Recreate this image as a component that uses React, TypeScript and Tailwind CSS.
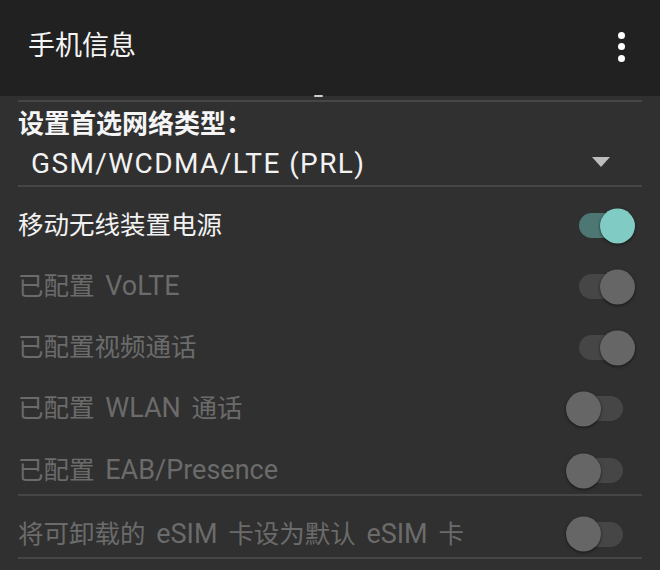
const font = { fontFamily: 'Roboto, "Noto Sans CJK SC", sans-serif' };

type ToggleProps = {
  on: boolean;
  enabled: boolean;
};

function Toggle({ on, enabled }: ToggleProps) {
  const track = enabled ? "bg-[#4d7773]" : "bg-[#464646]";
  const thumb = enabled ? "bg-[#80cbc4]" : "bg-[#666666]";
  return (
    <div className={`relative w-[44px] h-[25px] rounded-full ${track}`}>
      <div
        className={`absolute top-1/2 -translate-y-1/2 w-[35px] h-[35px] rounded-full shadow-[0_1px_3px_rgba(0,0,0,0.6)] ${thumb} ${
          on ? "left-[21px]" : "left-[-13px]"
        }`}
      />
    </div>
  );
}

function Divider() {
  return <div className="mx-[18px] h-[2px] bg-[#464646]" />;
}

// latin runs in the labels are drawn a bit larger than the CJK ones
function Label({ text }: { text: string }) {
  const parts = text.split(/([\x20-\x7e]+)/).filter((p) => p !== "");
  return (
    <>
      {parts.map((p, i) =>
        /^[\x20-\x7e]+$/.test(p) ? (
          <span key={i} className="text-[27px] [word-spacing:4px] whitespace-pre">
            {p}
          </span>
        ) : (
          <span key={i}>{p}</span>
        )
      )}
    </>
  );
}

type RowProps = {
  label: string;
  on: boolean;
  enabled: boolean;
  className: string;
};

function SwitchRow({ label, on, enabled, className }: RowProps) {
  return (
    <div className={`flex pl-[18px] pr-[37px] ${className}`}>
      <div className="flex flex-1 items-center justify-between">
        <span
          className={`text-[25.5px] leading-none ${enabled ? "text-[#f2f2f2]" : "text-[#6b6b6b]"}`}
        >
          <Label text={label} />
        </span>
        <Toggle on={on} enabled={enabled} />
      </div>
    </div>
  );
}

export default function App() {
  return (
    <div className="w-[660px] h-[570px] overflow-hidden bg-[#303030]" style={font}>
      <header className="flex h-[96px] items-center justify-between bg-[#212121] pl-[28px] pr-[35px] pb-[3px]">
        <h1 className="text-[27px] leading-none text-[#f5f5f5]">手机信息</h1>
        <div className="flex flex-col items-center gap-[4.5px]">
          <span className="h-[7px] w-[7px] rounded-full bg-white" />
          <span className="h-[7px] w-[7px] rounded-full bg-white" />
          <span className="h-[7px] w-[7px] rounded-full bg-white" />
        </div>
      </header>

      <div className="flex h-[4px] items-start pl-[314px]">
        <span className="mt-[-1px] h-[2px] w-[9px] rounded-full bg-[#cfcfcf]" />
      </div>
      <Divider />

      <div className="flex h-[42px] items-center pl-[18px] pt-[2px]">
        <span className="text-[26px] font-bold leading-none text-[#f5f5f5]">
          设置首选网络类型：
        </span>
      </div>
      <div className="flex h-[41px] items-center justify-between pl-[31px] pr-[50px] pb-[2px]">
        <span className="text-[28px] leading-none tracking-[1.4px] text-[#f2f2f2]">
          GSM/WCDMA/LTE (PRL)
        </span>
        <svg width="18" height="10" viewBox="0 0 18 10" className="mb-[4px]">
          <path d="M0 0 L18 0 L9 10 Z" fill="#bdbdbd" />
        </svg>
      </div>
      <Divider />

      <div className="h-[8px]" />
      <SwitchRow label="移动无线装置电源" on enabled className="h-[61px]" />
      <SwitchRow label="已配置 VoLTE" on enabled={false} className="h-[61px]" />
      <SwitchRow label="已配置视频通话" on enabled={false} className="h-[61px]" />
      <SwitchRow label="已配置 WLAN 通话" on={false} enabled={false} className="h-[61px]" />
      <SwitchRow label="已配置 EAB/Presence" on={false} enabled={false} className="h-[55px] pt-[8px]" />
      <Divider />
      <SwitchRow
        label="将可卸载的 eSIM 卡设为默认 eSIM 卡"
        on={false}
        enabled={false}
        className="h-[61px] pt-[15px]"
      />
      <Divider />
    </div>
  );
}
